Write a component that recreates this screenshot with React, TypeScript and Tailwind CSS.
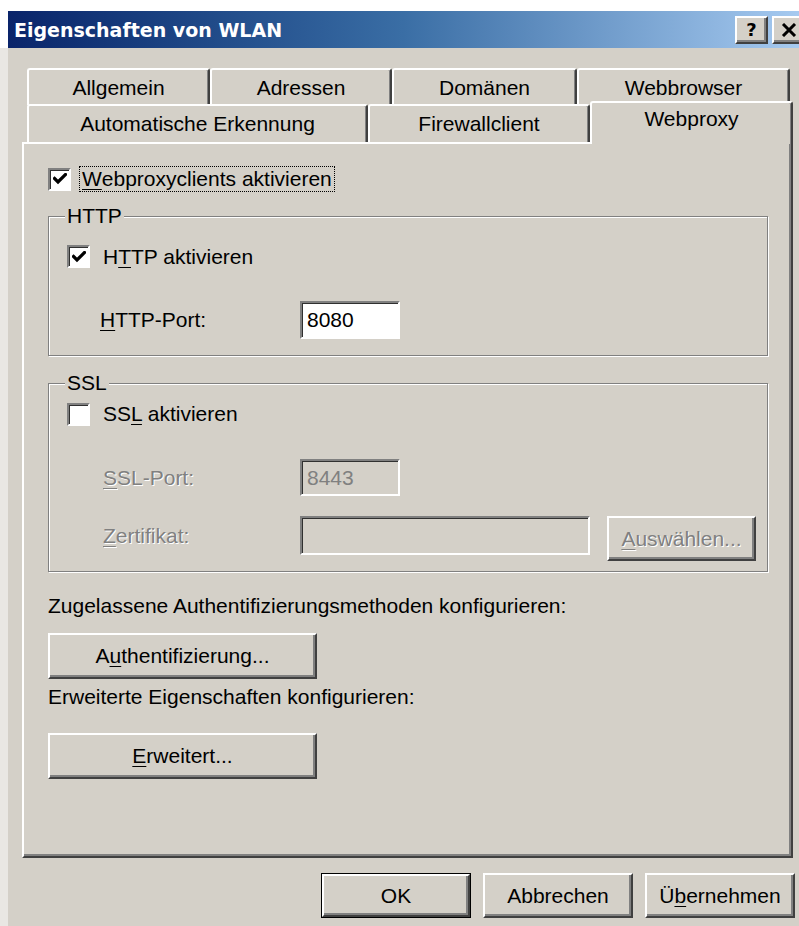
import type { ReactNode } from "react";

// classic 3D bevels
const raised =
  "border-2 border-t-white border-l-white border-r-[#404040] border-b-[#404040] shadow-[inset_-2px_-2px_0_#808080]";
const sunken =
  "border-2 border-t-[#808080] border-l-[#808080] border-r-white border-b-white shadow-[inset_1px_1px_0_#303030]";
const etched =
  "border border-[#808080] shadow-[inset_1px_1px_0_#ffffff,1px_1px_0_#ffffff]";
const grayed = "text-[#808080] [text-shadow:1px_1px_0_#ffffff]";

const topTabs = [
  { label: "Allgemein", w: "w-[183px]" },
  { label: "Adressen", w: "w-[182px]" },
  { label: "Domänen", w: "w-[185px]" },
  { label: "Webbrowser", w: "w-[213px]" },
];

const bottomTabs = [
  { label: "Automatische Erkennung", w: "w-[341px]" },
  { label: "Firewallclient", w: "w-[222px]" },
];

const Key = ({ children }: { children: ReactNode }) => (
  <u className="underline decoration-1 underline-offset-[3px]">{children}</u>
);

const CheckBox = ({ checked }: { checked?: boolean }) => (
  <span
    className={`w-[23px] h-[23px] shrink-0 bg-white flex items-center justify-center ${sunken}`}
  >
    {checked && (
      <svg width="14" height="12" viewBox="0 0 14 12">
        <path
          d="M1.5 5.5 L5 9 L12.5 1.5"
          fill="none"
          stroke="#000"
          strokeWidth="3.2"
          strokeLinecap="square"
        />
      </svg>
    )}
  </span>
);

const Button = ({
  children,
  className = "",
  disabled,
}: {
  children: ReactNode;
  className?: string;
  disabled?: boolean;
}) => (
  <div
    className={`flex items-center justify-center bg-[#d4d0c8] ${raised} ${
      disabled ? grayed : ""
    } ${className}`}
  >
    <span>{children}</span>
  </div>
);

const TitleButton = ({ children }: { children: ReactNode }) => (
  <div
    className={`w-[33px] h-[28px] bg-[#d4d0c8] flex items-center justify-center ${raised}`}
  >
    {children}
  </div>
);

export default function App() {
  return (
    <div className="w-[799px] h-[926px] overflow-hidden bg-white font-['Liberation_Sans',Arial,sans-serif] text-[21px] leading-[24px] text-black">
      <div className="h-[11px]" />
      {/* caption */}
      <div className="ml-[8px] h-[37px] flex items-center pl-[6px] bg-linear-to-r from-[#0a246a] via-[#3a6ea5] to-[#a6caf0]">
        <span className="font-['DejaVu_Sans',sans-serif] font-bold text-[19px] text-white">
          Eigenschaften von WLAN
        </span>
        <div className="ml-auto -mr-[6px] flex gap-[4px]">
          <TitleButton>
            <span className="font-['DejaVu_Sans',sans-serif] font-bold text-[18px] leading-none">
              ?
            </span>
          </TitleButton>
          <TitleButton>
            <svg width="16" height="14" viewBox="0 0 16 14">
              <path d="M2 1 L14 13 M14 1 L2 13" stroke="#000" strokeWidth="3" />
            </svg>
          </TitleButton>
        </div>
      </div>

      <div className="flex h-[878px]">
        <div className="w-[8px] bg-[#e9e7e3]" />
        <div className="flex-1 flex flex-col bg-[#d4d0c8]">
          {/* tabs */}
          <div className="pt-[20px] pl-[14px]">
            <div className="ml-[5px] flex h-[33px]">
              {topTabs.map((t) => (
                <div
                  key={t.label}
                  className={`${t.w} h-[37px] shrink-0 bg-[#d4d0c8] border-t-2 border-l-2 border-r-2 border-t-white border-l-white border-r-[#404040] rounded-t-[3px] shadow-[inset_-1px_0_0_#808080] flex items-center justify-center`}
                >
                  {t.label}
                </div>
              ))}
            </div>
            <div className="ml-[5px] flex items-end h-[41px]">
              {bottomTabs.map((t) => (
                <div
                  key={t.label}
                  className={`${t.w} h-[38px] shrink-0 bg-[#d4d0c8] border-t-2 border-l-2 border-r-2 border-t-white border-l-white border-r-[#404040] rounded-t-[3px] shadow-[inset_-1px_0_0_#808080] flex items-center justify-center`}
                >
                  {t.label}
                </div>
              ))}
              <div className="relative z-10 w-[203px] h-[43px] -mb-[2px] shrink-0 bg-[#d4d0c8] border-t-2 border-l-2 border-r-2 border-t-white border-l-white border-r-[#404040] rounded-t-[3px] shadow-[inset_-1px_0_0_#808080] flex justify-center pt-[4px]">
                Webproxy
              </div>
            </div>

            {/* page */}
            <div
              className={`w-[771px] h-[716px] flex flex-col px-[24px] pt-[23px] ${raised}`}
            >
              <div className="flex items-center h-[24px]">
                <CheckBox checked />
                <span className="ml-[8px] h-[26px] px-[2px] flex items-center border border-dotted border-black">
                  <Key>W</Key>ebproxyclients aktivieren
                </span>
              </div>

              <fieldset className={`mt-[13px] w-[720px] ${etched}`}>
                <legend className="ml-[16px] px-[2px] bg-[#d4d0c8] leading-[24px]">
                  HTTP
                </legend>
                <div className="flex flex-col pl-[18px] pb-[16px]">
                  <div className="mt-[17px] flex items-center gap-[13px] h-[23px]">
                    <CheckBox checked />
                    <span>
                      H<Key>T</Key>TP aktivieren
                    </span>
                  </div>
                  <div className="mt-[33px] flex items-center pl-[33px]">
                    <span className="w-[200px]">
                      <Key>H</Key>TTP-Port:
                    </span>
                    <div
                      className={`w-[100px] h-[38px] bg-white flex items-center pl-[5px] ${sunken}`}
                    >
                      8080
                    </div>
                  </div>
                </div>
              </fieldset>

              <fieldset className={`mt-[15px] w-[720px] ${etched}`}>
                <legend className="ml-[16px] px-[2px] bg-[#d4d0c8] leading-[24px]">
                  SSL
                </legend>
                <div className="flex flex-col pl-[18px] pb-[10px]">
                  <div className="mt-[8px] flex items-center gap-[13px] h-[22px]">
                    <CheckBox />
                    <span>
                      SS<Key>L</Key> aktivieren
                    </span>
                  </div>
                  <div className="mt-[34px] flex items-center pl-[36px]">
                    <span className={`w-[197px] ${grayed}`}>
                      <Key>S</Key>SL-Port:
                    </span>
                    <div
                      className={`w-[100px] h-[37px] flex items-center pl-[5px] text-[#808080] ${sunken}`}
                    >
                      8443
                    </div>
                  </div>
                  <div className="mt-[20px] flex items-start pl-[36px]">
                    <span className={`w-[197px] h-[39px] flex items-center ${grayed}`}>
                      <span>
                        <Key>Z</Key>ertifikat:
                      </span>
                    </span>
                    <div className={`w-[290px] h-[39px] ${sunken}`} />
                    <Button disabled className="ml-[17px] w-[149px] h-[45px]">
                      <Key>A</Key>uswählen...
                    </Button>
                  </div>
                </div>
              </fieldset>

              <p className="mt-[22px]">
                Zugelassene Authentifizierungsmethoden konfigurieren:
              </p>
              <Button className="mt-[15px] w-[269px] h-[46px]">
                A<Key>u</Key>thentifizierung...
              </Button>
              <p className="mt-[6px]">Erweiterte Eigenschaften konfigurieren:</p>
              <Button className="mt-[24px] w-[269px] h-[46px]">
                <Key>E</Key>rweitert...
              </Button>
            </div>
          </div>

          {/* dialog buttons */}
          <div className="mt-[15px] flex justify-end gap-[12px] pr-[4px]">
            <div className="border border-black">
              <Button className="w-[148px] h-[43px]">OK</Button>
            </div>
            <Button className="w-[150px] h-[45px]">Abbrechen</Button>
            <Button className="w-[150px] h-[45px]">
              Ü<Key>b</Key>ernehmen
            </Button>
          </div>
        </div>
      </div>
    </div>
  );
}
